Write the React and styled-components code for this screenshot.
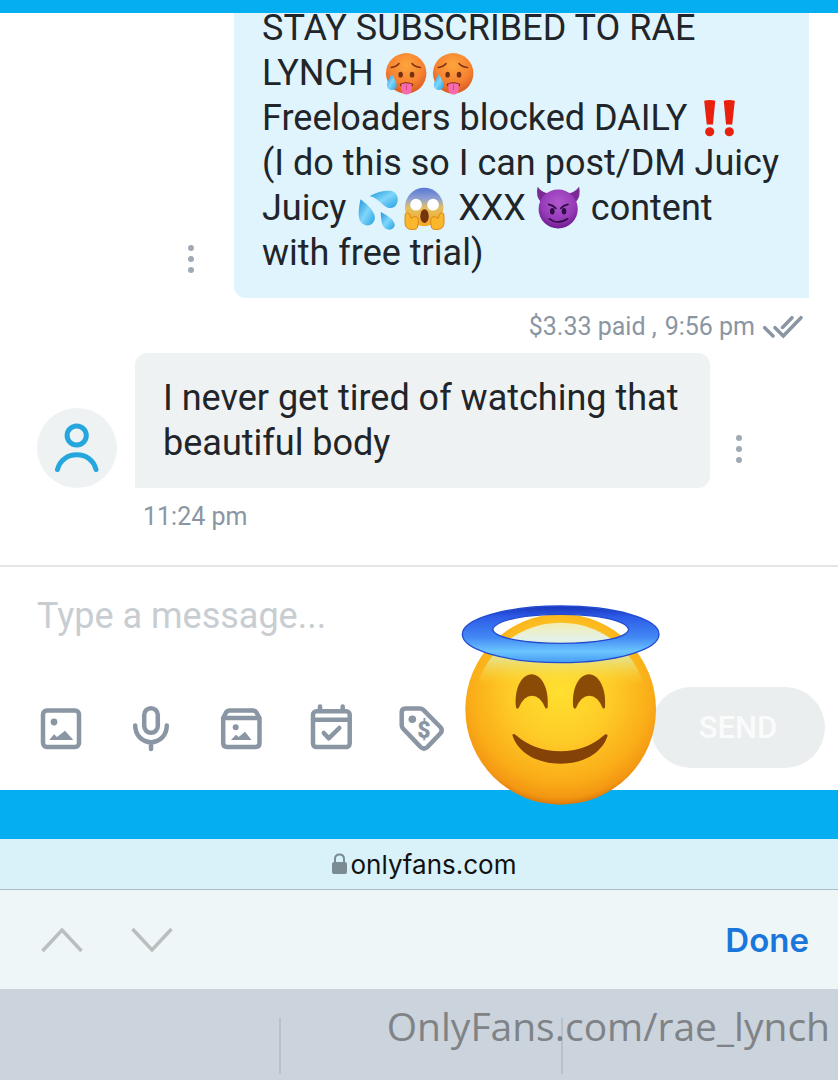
import React from "react";
import styled, { createGlobalStyle } from "styled-components";

const GlobalStyle = createGlobalStyle`
  * {
    box-sizing: border-box;
  }
  body {
    margin: 0;
    background: #fff;
    font-family: Roboto, "Liberation Sans", sans-serif;
  }
  button {
    padding: 0;
    border: none;
    background: none;
    font-family: inherit;
  }
  svg {
    display: block;
  }
`;

const Page = styled.div`
  display: flex;
  flex-direction: column;
  height: 100vh;
  overflow: hidden;
`;
const TopBar = styled.header`
  flex: none;
  height: 13px;
  background: #04aef0;
`;
const Chat = styled.main`
  flex: 1;
  min-height: 0;
  overflow: hidden;
  display: flex;
  flex-direction: column;
  justify-content: flex-end;
`;
const MessageRow = styled.div`
  flex: none;
  display: flex;
  align-items: flex-end;
  justify-content: ${(p) => (p.$own ? "flex-end" : "flex-start")};
  gap: ${(p) => (p.$own ? "14px" : "0")};
  padding: 0 29px 0 37px;
`;
const Bubble = styled.p`
  flex: 0 1 575px;
  margin: 0;
  padding: 23px 26px 22px 28px;
  border-radius: ${(p) => (p.$own ? "12px 12px 0 12px" : "12px 12px 12px 0")};
  background: ${(p) => (p.$own ? "#dff4fc" : "#eff2f3")};
  color: #212529;
  font-size: 36px;
  line-height: 45px;
`;
const Meta = styled.div`
  flex: none;
  display: flex;
  align-items: center;
  gap: 8px;
  height: ${(p) => (p.$own ? "55px" : "77px")};
  padding: ${(p) => (p.$own ? "2px 35px 0" : "0 143px 20px")};
  justify-content: ${(p) => (p.$own ? "flex-end" : "flex-start")};
  color: #8a96a3;
  font-size: 25px;
`;
const Kebab = styled.button`
  display: flex;
  align-items: center;
  justify-content: center;
  flex: none;
  width: 58px;
  height: 78px;
`;
const Avatar = styled.div`
  flex: none;
  width: 80px;
  height: 80px;
  margin-right: 18px;
  border-radius: 50%;
  background: #eff2f3;
`;
const Emoji = styled.svg`
  display: inline-block;
  width: 47px;
  height: 45px;
  vertical-align: top;
`;

const Composer = styled.form`
  position: relative;
  flex: none;
  border-top: 2px solid #e3e6e8;
`;
const MessageInput = styled.input`
  display: block;
  width: 100%;
  height: 98px;
  padding: 0 37px;
  border: none;
  outline: none;
  background: none;
  font-family: inherit;
  font-size: 36px;
  &::placeholder {
    color: #c8cdd1;
    opacity: 1;
  }
`;
const Tools = styled.div`
  display: flex;
  align-items: center;
  height: 125px;
  padding: 0 13px 0 16px;
`;
const Tool = styled.button`
  display: flex;
  justify-content: center;
  width: 90px;
  color: #8a96a3;
`;
const SendButton = styled.button`
  width: 174px;
  height: 81px;
  margin-left: auto;
  border-radius: 41px;
  background: #ebeeef;
  color: #fafbfb;
  font-size: 31px;
  font-weight: 500;
`;
const Sticker = styled.svg`
  position: absolute;
  z-index: 1;
  top: 36px;
  left: 460px;
  width: 201px;
  height: 204px;
`;

const BlueStrip = styled.div`
  flex: none;
  height: 49px;
  background: #04aef0;
`;
const AddressBar = styled.div`
  flex: none;
  display: flex;
  align-items: center;
  justify-content: center;
  gap: 4px;
  height: 51px;
  padding-left: 10px;
  border-bottom: 1px solid #a9bccb;
  background: #d9f2fa;
  color: #111;
  font-family: Inter, sans-serif;
  font-size: 26px;
`;
const FormBar = styled.div`
  flex: none;
  display: flex;
  align-items: center;
  height: 99px;
  padding: 0 29px 0 17px;
  background: #eef6f7;
`;
const ArrowButton = styled.button`
  display: flex;
  justify-content: center;
  width: 90px;
`;
const DoneButton = styled.button`
  margin-left: auto;
  color: #1b76dc;
  font-family: Inter, sans-serif;
  font-size: 33px;
  font-weight: 600;
`;
const Keyboard = styled.footer`
  position: relative;
  flex: none;
  display: grid;
  grid-template-columns: 1fr 34% 1fr;
  height: 91px;
  padding: 29px 0 6px 4px;
  background: #cbd3dd;
`;
const Suggestion = styled.div`
  &:nth-child(2) {
    border: solid #b8c0ca;
    border-width: 0 2px;
  }
`;
const Watermark = styled.span`
  position: absolute;
  top: 10px;
  right: 8px;
  color: #808386;
  font-family: "Open Sans", sans-serif;
  font-size: 39px;
  line-height: 54px;
`;

function Gradients() {
  return (
    <svg width="0" height="0" style={{ position: "absolute" }} aria-hidden="true">
      <defs>
        <radialGradient id="hot" cx="0.5" cy="0.3" r="0.7">
          <stop offset="0" stopColor="#fda63c" />
          <stop offset="0.6" stopColor="#f78332" />
          <stop offset="1" stopColor="#d95a20" />
        </radialGradient>
        <linearGradient id="drop" x1="0" y1="0" x2="1" y2="1">
          <stop offset="0" stopColor="#2196dd" />
          <stop offset="0.5" stopColor="#7fd6fa" />
          <stop offset="1" stopColor="#249fe0" />
        </linearGradient>
        <linearGradient id="scream" x1="0" y1="0" x2="0" y2="1">
          <stop offset="0" stopColor="#5877d8" />
          <stop offset="0.3" stopColor="#92a2cf" />
          <stop offset="0.52" stopColor="#e4bf62" />
          <stop offset="1" stopColor="#f7a91d" />
        </linearGradient>
        <radialGradient id="devil" cx="0.5" cy="0.35" r="0.65">
          <stop offset="0" stopColor="#b158cf" />
          <stop offset="0.65" stopColor="#963bb8" />
          <stop offset="1" stopColor="#701b90" />
        </radialGradient>
        <radialGradient id="face" cx="0.5" cy="0.4" r="0.6">
          <stop offset="0" stopColor="#ffe02f" />
          <stop offset="0.45" stopColor="#fecb27" />
          <stop offset="0.8" stopColor="#faac18" />
          <stop offset="0.94" stopColor="#f39712" />
          <stop offset="1" stopColor="#dd7908" />
        </radialGradient>
        <linearGradient id="shine" x1="0" y1="0" x2="0" y2="1">
          <stop offset="0" stopColor="#f3eeb0" />
          <stop offset="0.1" stopColor="#e2f1ea" />
          <stop offset="0.22" stopColor="#e6e58a" stopOpacity="0.8" />
          <stop offset="0.36" stopColor="#ffdd30" stopOpacity="0" />
        </linearGradient>
        <linearGradient id="halo" x1="0" y1="0" x2="0" y2="1">
          <stop offset="0" stopColor="#1834bd" />
          <stop offset="0.2" stopColor="#2e5de8" />
          <stop offset="0.55" stopColor="#4288f4" />
          <stop offset="0.8" stopColor="#6bc5ff" />
          <stop offset="1" stopColor="#459bf3" />
        </linearGradient>
      </defs>
    </svg>
  );
}

function HotFace() {
  return (
    <Emoji viewBox="0 0 144 135" role="img" aria-label="hot face">
      <circle cx="71" cy="67" r="62" fill="url(#hot)" />
      <path
        d="M25 49Q40 48 49 37M89 37Q98 48 115 49"
        fill="none"
        stroke="#7e3213"
        strokeWidth="5"
        strokeLinecap="round"
      />
      <ellipse cx="54" cy="71" rx="7" ry="9" fill="#743010" />
      <ellipse cx="89" cy="71" rx="7" ry="9" fill="#743010" />
      <path d="M51 100Q71 89 93 100L90 107H54Z" fill="#7b2413" />
      <path d="M56 100Q71 94 88 100V116Q86 132 72 132T56 116Z" fill="#f56bad" />
      <path d="M72 102V118" stroke="#d84288" strokeWidth="3" />
      <path d="M27 70Q42 94 42 104A15 14 0 0 1 12 104Q13 89 27 70Z" fill="url(#drop)" />
    </Emoji>
  );
}

function BangBang() {
  return (
    <Emoji viewBox="0 0 144 135" role="img" aria-label="double exclamation mark">
      <g fill="#e8210f">
        <path d="M25 13Q42 9 59 13L52 86H33ZM85 13Q102 9 119 13L111 86H92Z" />
        <circle cx="42" cy="108" r="14" />
        <circle cx="102" cy="108" r="14" />
      </g>
    </Emoji>
  );
}

function Droplets() {
  return (
    <Emoji viewBox="0 0 144 135" role="img" aria-label="sweat droplets">
      <g fill="url(#drop)">
        <path d="M45 29Q76 12 107 13C140 15 138 65 109 66C87 67 77 38 45 29Z" />
        <path d="M17 39Q60 70 61 96C59 124 24 128 14 102Q7 83 17 39Z" />
        <path d="M79 78Q120 98 122 118C119 136 93 138 85 119Q79 105 79 78Z" />
      </g>
    </Emoji>
  );
}

function ScreamFace() {
  return (
    <Emoji viewBox="0 0 144 135" role="img" aria-label="screaming face">
      <circle cx="68" cy="63" r="59" fill="url(#scream)" />
      <circle cx="43" cy="56" r="18" fill="#fff" />
      <circle cx="95" cy="56" r="18" fill="#fff" />
      <ellipse cx="69" cy="91" rx="13" ry="21" fill="#73340f" />
      <g fill="#fab72b" stroke="#d78314" strokeWidth="3">
        <path d="M10 84Q16 76 23 85L28 98Q39 88 46 94Q54 99 47 127Q43 134 23 131Q9 127 9 108Z" />
        <path d="M128 84Q122 76 115 85L110 98Q99 88 92 94Q84 99 91 127Q95 134 115 131Q129 127 129 108Z" />
      </g>
    </Emoji>
  );
}

function DevilFace() {
  return (
    <Emoji viewBox="0 0 144 135" role="img" aria-label="smiling face with horns">
      <path
        d="M8 1Q1 31 19 49L46 22Q22 20 8 1ZM135 1Q142 31 124 49L97 22Q121 20 135 1Z"
        fill="#7b2995"
      />
      <circle cx="71" cy="69" r="60" fill="url(#devil)" />
      <path
        d="M42 55Q56 58 64 67M101 55Q87 58 79 67M44 99Q71 119 100 99"
        fill="none"
        stroke="#310d46"
        strokeWidth="5"
        strokeLinecap="round"
      />
      <ellipse cx="53" cy="76" rx="7" ry="10" fill="#310d46" />
      <ellipse cx="89" cy="76" rx="7" ry="10" fill="#310d46" />
    </Emoji>
  );
}

function HaloSticker() {
  return (
    <Sticker viewBox="60 39 603 612" role="img" aria-label="smiling face with halo">
      <circle cx="362" cy="358" r="286" fill="url(#face)" />
      <circle cx="362" cy="358" r="260" fill="url(#shine)" />
      <path
        d="M228 352C222 294 246 253 275 253S328 295 323 352Q321 358 316 354Q301 317 276 317T236 354Q231 359 228 352Z"
        fill="#894b05"
      />
      <path
        d="M400 352C394 294 418 253 447 253S500 295 495 352Q493 358 488 354Q473 317 448 317T408 354Q403 359 400 352Z"
        fill="#894b05"
      />
      <path
        d="M217 435Q221 429 228 436Q284 484 361 484T492 436Q500 429 503 437C485 492 426 521 361 521S235 492 217 435Z"
        fill="#844206"
      />
      <path
        d="M67 133A295 85 0 0 1 657 133A295 85 0 0 1 67 133ZM158 118C168 174 558 174 566 118C548 58 176 58 158 118Z"
        fill="url(#halo)"
        fillRule="evenodd"
        stroke="#234bd0"
        strokeWidth="4"
      />
    </Sticker>
  );
}

function Dots() {
  return (
    <svg width="8" height="28" viewBox="0 0 8 28" fill="#a0aab4">
      <circle cx="4" cy="3" r="3" />
      <circle cx="4" cy="14" r="3" />
      <circle cx="4" cy="25" r="3" />
    </svg>
  );
}

function ToolIcon({ children }) {
  return (
    <svg
      width="48"
      height="48"
      viewBox="0 0 48 48"
      fill="none"
      stroke="currentColor"
      strokeWidth="4.5"
      strokeLinecap="round"
      strokeLinejoin="round"
    >
      {children}
    </svg>
  );
}

const tools = [
  {
    label: "Add media",
    icon: (
      <>
        <rect x="6" y="6.5" width="36" height="36.5" rx="4" />
        <g fill="currentColor" stroke="none">
          <circle cx="17" cy="18" r="3.4" />
          <path d="M12.3 36 17 30.3 20 33 28 26.7 36.3 36Z" />
        </g>
      </>
    ),
  },
  {
    label: "Record voice",
    icon: (
      <>
        <rect x="17.2" y="4.2" width="13.6" height="24.6" rx="6.8" />
        <path d="M8.2 21.5C8.2 31 15 38.2 24 38.2S39.8 31 39.8 21.5M24 38.2V45" />
      </>
    ),
  },
  {
    label: "Vault",
    icon: (
      <>
        <path d="M6.2 14H42.5V39Q42.5 43 38.5 43H10.2Q6.2 43 6.2 39ZM6.2 14 8.8 9Q10 6.5 12.8 6.5H35.8Q38.6 6.5 39.8 9L42.5 14" />
        <g fill="currentColor" stroke="none">
          <circle cx="18.7" cy="23.3" r="3" />
          <path d="M14 36 19 30.8 21.7 33 28 27.8 34.5 36Z" />
        </g>
      </>
    ),
  },
  {
    label: "Schedule",
    icon: (
      <>
        <rect x="6" y="7.3" width="36.7" height="35.8" rx="3.5" />
        <path d="M6 15.7H42.7M13 2.5V6M35.7 2.5V6M16.8 29 21.7 34.3 32.3 24" />
      </>
    ),
  },
  {
    label: "Set price",
    icon: (
      <>
        <path d="M8.5 4.5H22.5Q25 4.5 26.6 6.1L43.3 23Q46.2 26.3 43.3 29.5L30.3 43.1Q27 46 23.7 43.1L6.2 24.8Q4.7 23.2 4.7 21V8.3Q4.7 4.5 8.5 4.5Z" />
        <circle cx="15.3" cy="15.3" r="3.8" fill="currentColor" stroke="none" />
        <text
          x="27"
          y="34"
          textAnchor="middle"
          fill="currentColor"
          stroke="none"
          fontSize="23"
          fontWeight="900"
        >
          $
        </text>
      </>
    ),
  },
];

function App() {
  return (
    <Page>
      <GlobalStyle />
      <Gradients />
      <TopBar />
      <Chat>
        <MessageRow $own>
          <Kebab type="button" aria-label="Message options">
            <Dots />
          </Kebab>
          <Bubble $own>
            STAY SUBSCRIBED TO RAE
            <br />
            LYNCH <HotFace />
            <HotFace />
            <br />
            Freeloaders blocked DAILY <BangBang />
            <br />
            (I do this so I can post/DM Juicy
            <br />
            Juicy <Droplets />
            <ScreamFace /> XXX <DevilFace /> content
            <br />
            with free trial)
          </Bubble>
        </MessageRow>
        <Meta $own>
          <span>$3.33 paid ,</span>
          <span>9:56 pm</span>
          <svg
            width="40"
            height="24"
            viewBox="0 0 40 24"
            fill="none"
            stroke="#8a96a3"
            strokeWidth="3.5"
            strokeLinecap="round"
          >
            <path d="M1.7 12.7 10 21M12 12.7 20.3 21 38 2.7M19.5 12.5 29 2.7" />
          </svg>
        </Meta>
        <MessageRow>
          <Avatar>
            <svg
              width="80"
              height="80"
              viewBox="0 0 80 80"
              fill="none"
              stroke="#25a7dd"
              strokeWidth="5"
              strokeLinecap="round"
            >
              <circle cx="39.7" cy="27.5" r="9.6" />
              <path d="M20.5 61.5C23 51.8 31 46.8 39.8 46.8S56.5 51.8 59 61.5" />
            </svg>
          </Avatar>
          <Bubble>I never get tired of watching that beautiful body</Bubble>
          <Kebab type="button" aria-label="Message options">
            <Dots />
          </Kebab>
        </MessageRow>
        <Meta>11:24 pm</Meta>
      </Chat>
      <Composer>
        <MessageInput aria-label="Message" placeholder="Type a message..." />
        <Tools>
          {tools.map((tool) => (
            <Tool key={tool.label} type="button" aria-label={tool.label}>
              <ToolIcon>{tool.icon}</ToolIcon>
            </Tool>
          ))}
          <SendButton type="button">SEND</SendButton>
        </Tools>
        <HaloSticker />
      </Composer>
      <BlueStrip />
      <AddressBar>
        <svg width="15" height="22" viewBox="0 0 15 22">
          <rect y="9" width="15" height="12" rx="2" fill="#7b8b94" />
          <path
            d="M3 10V6Q3 1.5 7.5 1.5T12 6V10"
            fill="none"
            stroke="#7b8b94"
            strokeWidth="2"
          />
        </svg>
        <span>onlyfans.com</span>
      </AddressBar>
      <FormBar>
        <ArrowButton type="button" aria-label="Previous field">
          <svg width="42" height="26" viewBox="0 0 42 26" fill="none" stroke="#b9bfbf" strokeWidth="3.5">
            <path d="M1.5 24 21 3 40.5 24" />
          </svg>
        </ArrowButton>
        <ArrowButton type="button" aria-label="Next field">
          <svg width="42" height="26" viewBox="0 0 42 26" fill="none" stroke="#b9bfbf" strokeWidth="3.5">
            <path d="M1.5 2 21 23 40.5 2" />
          </svg>
        </ArrowButton>
        <DoneButton type="button">Done</DoneButton>
      </FormBar>
      <Keyboard>
        <Suggestion />
        <Suggestion />
        <Suggestion />
        <Watermark>OnlyFans.com/rae_lynch</Watermark>
      </Keyboard>
    </Page>
  );
}

export default App;
